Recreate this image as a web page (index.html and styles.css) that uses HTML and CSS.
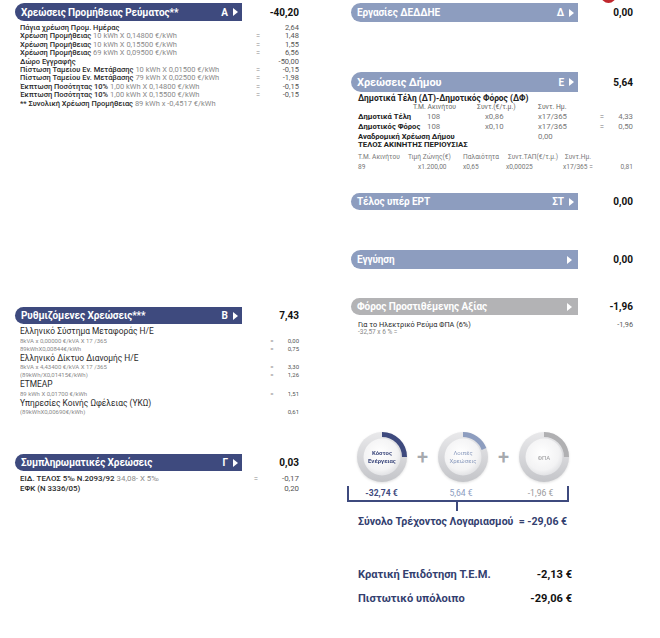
FILE: index.html
```html
<!DOCTYPE html>
<html lang="el">
<head>
<meta charset="utf-8">
<link rel="stylesheet" href="styles.css">
</head>
<body>
<div class="badge"></div>
<div class="page">
  <div class="col">
    <section class="sec-a">
      <div class="head">
        <div class="bar navy"><span class="title">Χρεώσεις Προμήθειας Ρεύματος**</span><span class="code">Α</span><span class="tri"></span></div>
        <div class="total">-40,20</div>
      </div>
      <div class="rows rows-a">
        <div class="row"><span class="t"><b>Πάγια χρέωση Προμ. Ημέρας</b></span><span class="eq"></span><span class="v">2,64</span></div>
        <div class="row"><span class="t"><b>Χρέωση Προμήθειας</b> 10 kWh X 0,14800 €/kWh</span><span class="eq">=</span><span class="v">1,48</span></div>
        <div class="row"><span class="t"><b>Χρέωση Προμήθειας</b> 10 kWh X 0,15500 €/kWh</span><span class="eq">=</span><span class="v">1,55</span></div>
        <div class="row"><span class="t"><b>Χρέωση Προμήθειας</b> 69 kWh X 0,09500 €/kWh</span><span class="eq">=</span><span class="v">6,56</span></div>
        <div class="row"><span class="t"><b>Δώρο Εγγραφής</b></span><span class="eq"></span><span class="v">-50,00</span></div>
        <div class="row"><span class="t"><b>Πίστωση Ταμείου Εν. Μετάβασης</b> 10 kWh X 0,01500 €/kWh</span><span class="eq">=</span><span class="v">-0,15</span></div>
        <div class="row"><span class="t"><b>Πίστωση Ταμείου Εν. Μετάβασης</b> 79 kWh X 0,02500 €/kWh</span><span class="eq">=</span><span class="v">-1,98</span></div>
        <div class="row"><span class="t"><b>Έκπτωση Ποσότητας 10%</b> 1,00 kWh X 0,14800 €/kWh</span><span class="eq">=</span><span class="v">-0,15</span></div>
        <div class="row"><span class="t"><b>Έκπτωση Ποσότητας 10%</b> 1,00 kWh X 0,15500 €/kWh</span><span class="eq">=</span><span class="v">-0,15</span></div>
        <div class="row"><span class="t"><b>** Συνολική Χρέωση Προμήθειας</b> 89 kWh x -0,4517 €/kWh</span><span class="eq"></span><span class="v"></span></div>
      </div>
    </section>

    <section class="sec-b">
      <div class="head">
        <div class="bar navy"><span class="title">Ρυθμιζόμενες Χρεώσεις***</span><span class="code">Β</span><span class="tri"></span></div>
        <div class="total">7,43</div>
      </div>
      <div class="rows rows-b">
        <div class="big">Ελληνικό Σύστημα Μεταφοράς Η/Ε</div>
        <div class="row small"><span class="t">8kVA x 0,00000 €/kVA X 17 /365</span><span class="eq">=</span><span class="v">0,00</span></div>
        <div class="row small"><span class="t">89kWhX0,00844€/kWh</span><span class="eq">=</span><span class="v">0,75</span></div>
        <div class="big">Ελληνικό Δίκτυο Διανομής Η/Ε</div>
        <div class="row small"><span class="t">8kVA x 4,43400 €/kVA X 17 /365</span><span class="eq">=</span><span class="v">3,30</span></div>
        <div class="row small"><span class="t">(89kWh/X0,01415€/kWh)</span><span class="eq">=</span><span class="v">1,26</span></div>
        <div class="big">ΕΤΜΕΑΡ</div>
        <div class="row small"><span class="t">89 kWh X 0,01700 €/kWh</span><span class="eq">=</span><span class="v">1,51</span></div>
        <div class="big">Υπηρεσίες Κοινής Ωφέλειας (ΥΚΩ)</div>
        <div class="row small"><span class="t">(89kWhX0,00690€/kWh)</span><span class="eq"></span><span class="v">0,61</span></div>
      </div>
    </section>

    <section class="sec-c">
      <div class="head">
        <div class="bar navy"><span class="title">Συμπληρωματικές Χρεώσεις</span><span class="code">Γ</span><span class="tri"></span></div>
        <div class="total">0,03</div>
      </div>
      <div class="rows rows-c">
        <div class="row"><span class="t"><b>ΕΙΔ. ΤΕΛΟΣ 5‰ Ν.2093/92</b> 34,08- Χ 5‰</span><span class="eq">=</span><span class="v">-0,17</span></div>
        <div class="row"><span class="t"><b>ΕΦΚ (Ν 3336/05)</b></span><span class="eq"></span><span class="v">0,20</span></div>
      </div>
    </section>
  </div>

  <div class="col">
    <section class="sec-d">
      <div class="head">
        <div class="bar light"><span class="title">Εργασίες ΔΕΔΔΗΕ</span><span class="code">Δ</span><span class="tri"></span></div>
        <div class="total">0,00</div>
      </div>
    </section>

    <section class="sec-e">
      <div class="head">
        <div class="bar light tall"><span class="title big-title">Χρεώσεις Δήμου</span><span class="code">Ε</span><span class="tri"></span></div>
        <div class="total">5,64</div>
      </div>
      <div class="dimos">
        <div class="d-title">Δημοτικά Τέλη (ΔΤ)-Δημοτικός Φόρος (ΔΦ)</div>
        <div class="grid1 ghead"><span></span><span>Τ.Μ. Ακινήτου</span><span>Συντ.(€/τ.μ.)</span><span>Συντ. Ημ.</span><span></span><span></span></div>
        <div class="grid1 gdata r3"><b>Δημοτικά Τέλη</b><span class="pad1">108</span><span class="pad">x0,86</span><span>x17/365</span><span class="c">=</span><span class="v">4,33</span></div>
        <div class="grid1 gdata"><b>Δημοτικός Φόρος</b><span class="pad1">108</span><span class="pad">x0,10</span><span>x17/365</span><span class="c">=</span><span class="v">0,50</span></div>
        <div class="grid1 gdata r5"><b class="wide">Αναδρομική Χρέωση Δήμου</b><span>0,00</span><span></span><span></span></div>
        <div class="d-title r6">ΤΕΛΟΣ ΑΚΙΝΗΤΗΣ ΠΕΡΙΟΥΣΙΑΣ</div>
        <div class="grid2 ghead2 r7"><span>Τ.Μ. Ακινήτου</span><span>Τιμή Ζώνης(€)</span><span>Παλαιότητα</span><span>Συντ.ΤΑΠ(€/τ.μ.)</span><span>Συντ.Ημ.</span><span></span></div>
        <div class="grid2 ghead2"><span>89</span><span class="pad2">x1.200,00</span><span>x0,65</span><span class="neg">x0,00025</span><span class="neg">x17/365 =</span><span class="v">0,81</span></div>
      </div>
    </section>

    <section class="sec-f">
      <div class="head">
        <div class="bar light"><span class="title">Τέλος υπέρ ΕΡΤ</span><span class="code">ΣΤ</span><span class="tri"></span></div>
        <div class="total">0,00</div>
      </div>
    </section>

    <section class="sec-g">
      <div class="head">
        <div class="bar light"><span class="title">Εγγύηση</span><span class="tri"></span></div>
        <div class="total">0,00</div>
      </div>
    </section>

    <section class="sec-h">
      <div class="head">
        <div class="bar gray"><span class="title">Φόρος Προστιθέμενης Αξίας</span><span class="tri"></span></div>
        <div class="total">-1,96</div>
      </div>
      <div class="vat">
        <div class="vat-row"><span>Για το Ηλεκτρικό Ρεύμα ΦΠΑ (6%)</span><span>-1,96</span></div>
        <div class="vat-sub">-32,57 x 6 % =</div>
      </div>
    </section>

    <section class="charts">
      <div class="donuts">
        <svg class="donut" width="54" height="54" viewBox="0 0 54 54">
          <defs>
            <linearGradient id="ring" x1="0" y1="0" x2="0" y2="1">
              <stop offset="0" stop-color="#e9e9eb"/>
              <stop offset="1" stop-color="#c4c5c9"/>
            </linearGradient>
            <radialGradient id="disc" cx="0.45" cy="0.4" r="0.65">
              <stop offset="0" stop-color="#ffffff"/>
              <stop offset="0.7" stop-color="#f3f3f4"/>
              <stop offset="1" stop-color="#dcdde0"/>
            </radialGradient>
          </defs>
          <circle cx="27" cy="27" r="25" fill="url(#ring)"/>
          <path d="M27 4.5 A22.5 22.5 0 0 1 49.5 27" fill="none" stroke="#3e4a7e" stroke-width="5"/>
          <circle cx="27" cy="27" r="18.5" fill="url(#disc)"/>
          <text x="27" y="25" class="dt navy-t">Κόστος</text>
          <text x="27" y="33" class="dt navy-t">Ενέργειας</text>
        </svg>
        <span class="plus">+</span>
        <svg class="donut" width="54" height="54" viewBox="0 0 54 54">
          <circle cx="27" cy="27" r="25" fill="url(#ring)"/>
          <path d="M27 4.5 A22.5 22.5 0 0 1 48 19" fill="none" stroke="#8d9dbf" stroke-width="5"/>
          <circle cx="27" cy="27" r="18.5" fill="url(#disc)"/>
          <text x="27" y="25" class="dt light-t">Λοιπές</text>
          <text x="27" y="33" class="dt light-t">Χρεώσεις</text>
        </svg>
        <span class="plus">+</span>
        <svg class="donut" width="54" height="54" viewBox="0 0 54 54">
          <circle cx="27" cy="27" r="25" fill="url(#ring)"/>
          <path d="M27 4.5 A22.5 22.5 0 0 1 49.5 27" fill="none" stroke="#b0b0b2" stroke-width="5"/>
          <circle cx="27" cy="27" r="18.5" fill="url(#disc)"/>
          <text x="27" y="29.5" class="dt gray-t">ΦΠΑ</text>
        </svg>
      </div>
      <div class="bracket">
        <span class="lbl l1">-32,74 €</span>
        <span class="gapx"></span>
        <span class="lbl l2">5,64 €</span>
        <span class="gapx"></span>
        <span class="lbl l3">-1,96 €</span>
      </div>
      <div class="tick"></div>
      <div class="sum">Σύνολο Τρέχοντος Λογαριασμού&nbsp; = -29,06 €</div>
    </section>

    <section class="bottom">
      <div class="brow"><span>Κρατική Επιδότηση Τ.Ε.Μ.</span><span>-2,13 €</span></div>
      <div class="brow second"><span>Πιστωτικό υπόλοιπο</span><span>-29,06 €</span></div>
    </section>
  </div>
</div>
</body>
</html>
```

FILE: styles.css
```css
* { box-sizing: border-box; }
html, body { margin: 0; padding: 0; background: #ffffff; }
body {
  width: 660px;
  height: 638px;
  overflow: hidden;
  font-family: Roboto, "Liberation Sans", sans-serif;
  color: #222;
  position: relative;
}

.badge {
  position: absolute;
  left: 601px;
  top: -12px;
  width: 15px;
  height: 15px;
  border-radius: 50%;
  background: #c0272d;
}

.page {
  display: grid;
  grid-template-columns: 284px 282px;
  column-gap: 52px;
  padding-left: 15px;
}

.col { display: flex; flex-direction: column; }

/* section header */
.head {
  display: flex;
  align-items: center;
  justify-content: space-between;
}
.bar {
  width: 227px;
  height: 18px;
  border-radius: 10px 0 0 10px;
  display: flex;
  align-items: center;
  padding: 0 4px 0 6px;
  color: #fff;
  font-weight: 700;
}
.bar.navy { background: #3e4a7e; }
.bar.light { background: #8d9dbf; }
.bar.gray { background: #b3b3b5; }
.bar.tall { height: 20px; }
.title { font-size: 10px; letter-spacing: -0.1px; white-space: nowrap; }
.big-title { font-size: 11px; }
.code { margin-left: auto; font-size: 10px; margin-right: 5px; }
.tri {
  width: 0; height: 0;
  border-top: 4px solid transparent;
  border-bottom: 4px solid transparent;
  border-left: 5px solid #fff;
  margin-left: 0;
}
.bar .title + .tri { margin-left: auto; margin-right: 2px; }
.total { font-size: 10px; font-weight: 700; color: #111; }

/* rows */
.row { display: grid; align-items: center; white-space: nowrap; }
.row .t b { font-weight: 500; color: #2a2a2a; }
.row .t { color: #8a8a8a; overflow: hidden; }
.row .eq { text-align: center; color: #8a8a8a; }
.row .v { text-align: right; color: #555; }

.sec-a { margin-top: 3px; }
.rows-a { margin-top: 3px; padding-left: 5px; }
.rows-a .row {
  grid-template-columns: 1fr 8px 37px;
  font-size: 7.5px;
  line-height: 8.4px;
}

.sec-b { margin-top: 199px; }
.sec-b .bar, .sec-c .bar { height: 17px; }
.rows-b { margin-top: 2px; padding-left: 5px; }
.rows-b .big { font-size: 8.4px; line-height: 10.5px; color: #2a2a2a; }
.rows-b .small {
  grid-template-columns: 1fr 8px 23px;
  font-size: 6px;
  line-height: 8px;
}
.rows-b .small .t { color: #8a8a8a; }

.sec-c { margin-top: 38px; }
.rows-c { margin-top: 3px; padding-left: 5px; }
.rows-c .row {
  grid-template-columns: 1fr 8px 39px;
  font-size: 7.9px;
  line-height: 10px;
}

/* right column */
.sec-d { margin-top: 3px; }
.sec-d .bar { height: 19px; }
.sec-e { margin-top: 50px; }
.dimos { margin-top: 1px; padding-left: 7px; }
.d-title { font-size: 8.4px; font-weight: 700; line-height: 10px; color: #222; white-space: nowrap; }
.d-title.r6 { line-height: 7px; font-size: 7.8px; }
.grid1 {
  display: grid;
  grid-template-columns: 55px 64px 61px 60px 8px 27px;
  white-space: nowrap;
}
.grid1.ghead { font-size: 6.8px; line-height: 8px; color: #666; }
.grid1.gdata { font-size: 7.8px; line-height: 10px; color: #777; }
.grid1.gdata b { font-weight: 700; color: #222; font-size: 7.6px; }
.grid1.r3 { margin-top: 1px; }
.grid1.r5 { line-height: 9px; }
.grid1 .wide { grid-column: span 3; }
.grid1 .pad1 { padding-left: 14px; }
.grid1 .pad { padding-left: 8px; }
.grid1 .c { text-align: center; }
.grid1 .v, .grid2 .v { text-align: right; }
.grid2 {
  display: grid;
  grid-template-columns: 50px 55px 45px 57px 47px 21px;
  white-space: nowrap;
  font-size: 6.6px;
  line-height: 10px;
  color: #777;
}
.grid2.r7 { margin-top: 4px; }
.grid2 .pad2 { padding-left: 10px; }
.grid2 .neg { margin-left: -2px; }

.sec-f { margin-top: 21px; }
.sec-f .bar { height: 17px; }
.sec-g { margin-top: 40px; }
.sec-g .bar { height: 19px; }
.sec-h { margin-top: 29px; }
.sec-h .bar { height: 17px; }
.vat { padding-left: 7px; margin-top: 5px; }
.vat-row {
  display: flex;
  justify-content: space-between;
  font-size: 7.3px;
  line-height: 9px;
  color: #2a2a2a;
}
.vat-row span:last-child { color: #555; }
.vat-sub { font-size: 6.5px; line-height: 7px; color: #888; }

/* charts */
.charts { margin-top: 94px; }
.donuts { display: flex; align-items: center; margin-left: 4px; }
.donut { display: block; filter: drop-shadow(0 1px 1px rgba(0,0,0,0.12)); }
.plus {
  width: 27px;
  text-align: center;
  font-size: 20px;
  font-weight: 500;
  color: #a6a9ae;
  line-height: 20px;
}
.dt {
  font-family: Roboto, "Liberation Sans", sans-serif;
  font-size: 6px;
  text-anchor: middle;
}
.navy-t { fill: #3e4a7e; font-weight: 700; }
.light-t { fill: #8d9dbf; }
.gray-t { fill: #9a9a9c; }

.bracket {
  margin-top: 2px;
  margin-left: -4px;
  width: 222px;
  height: 16px;
  border: 2px solid #3e4a7e;
  border-top: none;
  display: flex;
  padding-left: 6px;
  align-items: center;
}
.lbl { width: 54px; text-align: center; font-size: 8.6px; line-height: 14px; white-space: nowrap; }
.gapx { width: 27px; }
.l1 { color: #3e4a7e; font-weight: 700; }
.l2 { color: #8d9dbf; }
.l3 { color: #9a9a9c; }
.tick {
  width: 2px;
  height: 9px;
  background: #3e4a7e;
  margin-left: 105px;
}
.sum {
  margin-top: 4px;
  margin-left: 7px;
  font-size: 10.6px;
  line-height: 14px;
  font-weight: 700;
  color: #33406f;
  white-space: nowrap;
}

.bottom { margin-top: 39px; margin-left: 7px; width: 214px; }
.brow {
  display: flex;
  justify-content: space-between;
  font-size: 11.1px;
  line-height: 14px;
  font-weight: 700;
  color: #33406f;
}
.brow span:last-child { color: #111; }
.brow.second { margin-top: 10px; }
```
